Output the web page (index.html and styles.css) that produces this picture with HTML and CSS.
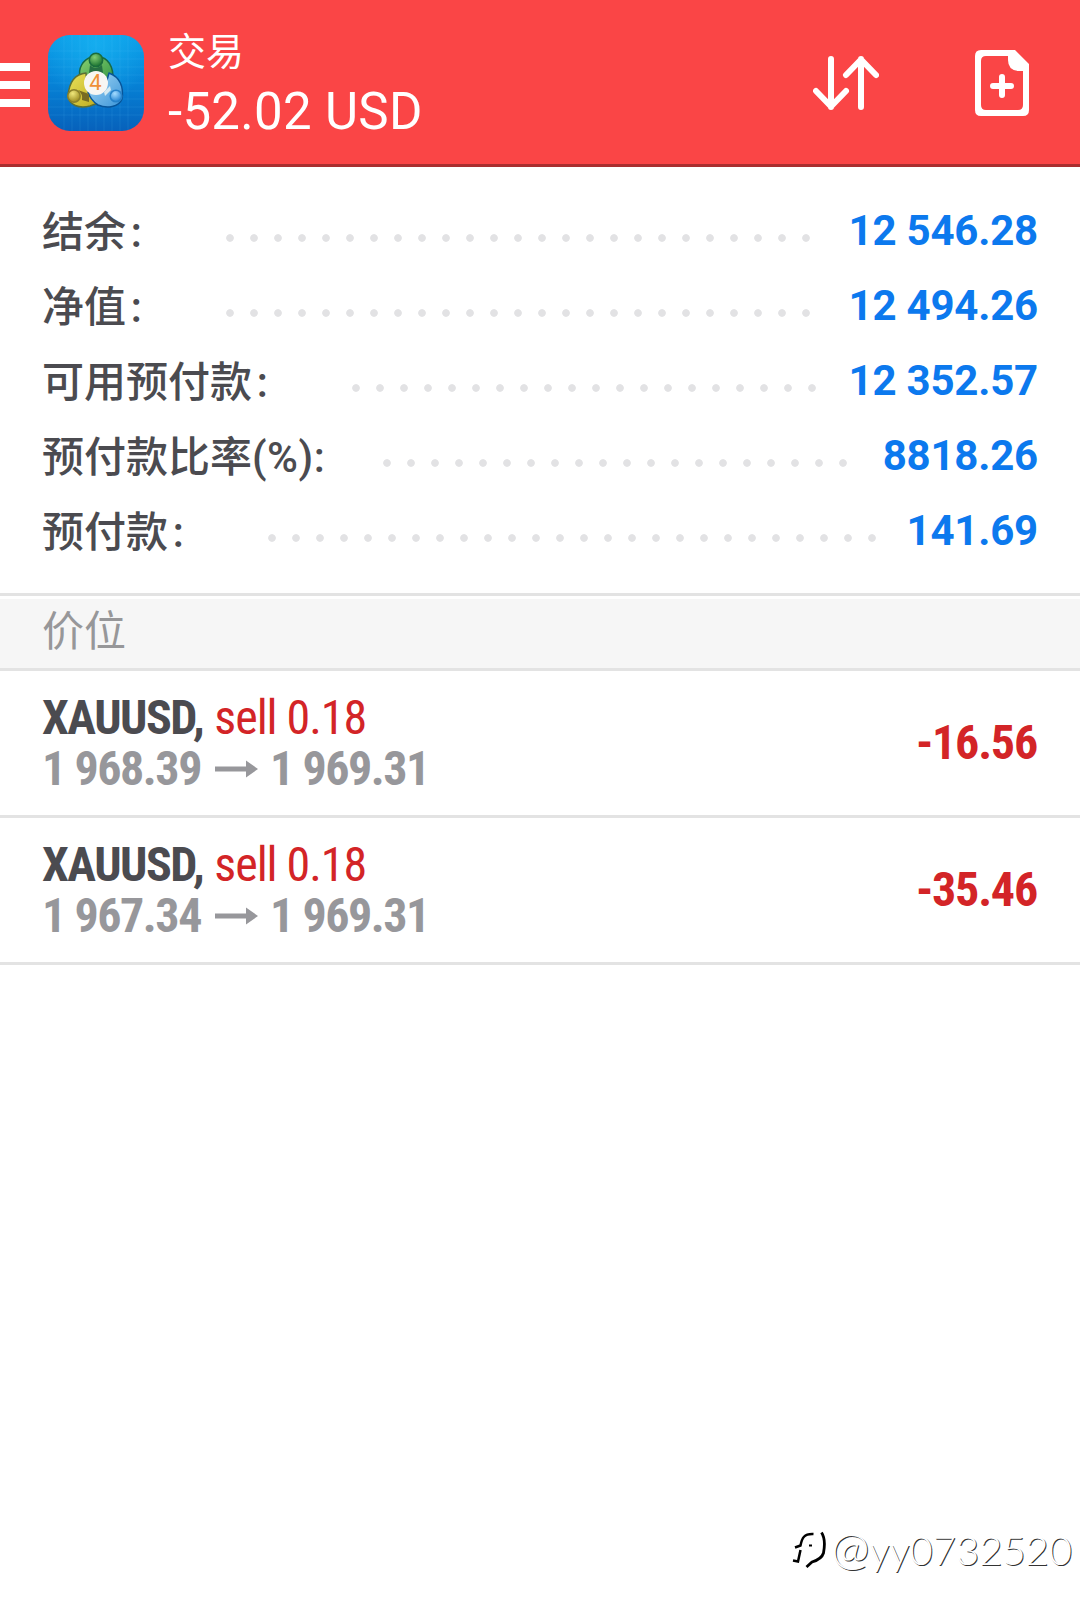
FILE: index.html
```html
<!DOCTYPE html>
<html lang="zh-CN">
<head>
<meta charset="utf-8">
<title>交易</title>
<link rel="stylesheet" href="styles.css">
</head>
<body>
<header class="topbar">
  <div class="menu"><i></i><i></i><i></i></div>
  <svg class="logo" width="98" height="98" viewBox="0 0 98 98">
    <defs>
      <linearGradient id="sky" x1="0" y1="0" x2="0" y2="1"><stop offset="0" stop-color="#0a9de8"/><stop offset=".5" stop-color="#0682d6"/><stop offset="1" stop-color="#0761bb"/></linearGradient>
      <radialGradient id="glow" cx=".5" cy=".1" r=".6"><stop offset="0" stop-color="#19b4f2" stop-opacity=".75"/><stop offset="1" stop-color="#19b4f2" stop-opacity="0"/></radialGradient>
      <linearGradient id="green" x1="0" y1="0" x2="1" y2="1"><stop offset="0" stop-color="#8ad070"/><stop offset="1" stop-color="#2f9342"/></linearGradient>
      <linearGradient id="yellow" x1="0" y1="0" x2="1" y2="1"><stop offset="0" stop-color="#e9e25a"/><stop offset="1" stop-color="#bda91e"/></linearGradient>
      <linearGradient id="blue" x1="0" y1="0" x2="1" y2="1"><stop offset="0" stop-color="#a5d8f5"/><stop offset="1" stop-color="#3a94d8"/></linearGradient>
      <radialGradient id="gball" cx=".4" cy=".3" r=".7"><stop offset="0" stop-color="#84cf72"/><stop offset="1" stop-color="#18702f"/></radialGradient>
      <radialGradient id="yball" cx=".4" cy=".3" r=".7"><stop offset="0" stop-color="#efe77b"/><stop offset="1" stop-color="#9c8c20"/></radialGradient>
      <radialGradient id="bball" cx=".4" cy=".3" r=".7"><stop offset="0" stop-color="#a5dcff"/><stop offset="1" stop-color="#2383d2"/></radialGradient>
    </defs>
    <rect x="1" y="1" width="96" height="96" rx="22" fill="url(#sky)"/>
    <rect x="1" y="1" width="96" height="96" rx="22" fill="url(#glow)"/>
    <path d="M17 2v94M25 1v96M33 1v96M41 1v96M49 1v96M57 1v96M65 1v96M73 1v96M81 2v94M2 17h94M1 25h96M1 33h96M1 41h96M1 49h96M1 57h96M1 65h96M1 73h96M2 81h94" stroke="#6cc4f5" stroke-opacity=".12" fill="none"/>
    <g stroke-linejoin="round" stroke-width="1.5">
      <path d="M44 23C36 26 31 34 33 43L49 51L65 51C68 38 64 26 54 23Z" fill="url(#green)" stroke="#176a45"/>
      <path d="M39 39C27 40 22 50 21 62C22 71 32 75 43 72L54 68L40 55Z" fill="url(#yellow)" stroke="#5d7035"/>
      <path d="M62 39C73 43 77 53 75 65C72 73 60 75 51 71C46 68 42 62 41 58L57 57Z" fill="url(#blue)" stroke="#07559a"/>
      <path d="M43 31Q48 37 55 31L56 39H42Z" fill="#276f42" stroke="none"/>
      <path d="M31 56Q36 60 35 66L42 68L42 60Z" fill="#786c22" stroke="none"/>
      <path d="M58 62L64 56L63 52L57 58Z" fill="#d6eaf1" stroke="none"/>
      <circle cx="49" cy="26" r="6.700" fill="url(#gball)" stroke="#1b6c3d"/>
      <circle cx="27" cy="62" r="6.200" fill="url(#yball)" stroke="#8b812b"/>
      <circle cx="69" cy="62" r="5.800" fill="url(#bball)" stroke="#2682ca"/>
    </g>
    <circle cx="49" cy="49" r="12" fill="#f7f6f3"/>
    <text class="logo-digit" x="48.500" y="56" text-anchor="middle">4</text>
  </svg>
  <div class="titles">
    <div class="title">交易</div>
    <div class="total">-52.02 USD</div>
  </div>
  <div class="actions">
    <svg width="66" height="68" viewBox="813 49 66 68" fill="none" stroke="#fff" stroke-width="6" stroke-linecap="round" stroke-linejoin="round"><path d="M831 59V107M816 91L831 106.500L846 91M861 107V59M846 75L861 59.500L876 75"/></svg>
    <svg width="54" height="68" viewBox="975 49 54 68"><path fill="#fff" fill-rule="evenodd" d="M981 50H1015L1029 64V110Q1029 116 1023 116H981Q975 116 975 110V56Q975 50 981 50ZM986 56Q981 56 981 61V105Q981 110 986 110H1018Q1023 110 1023 105V71H1018Q1008 70 1008 60V56Z"/><path d="M993 86H1011M1002 77V95" stroke="#fff" stroke-width="6" stroke-linecap="round"/></svg>
  </div>
</header>

<section class="summary">
  <div class="row"><span class="label">结余<span class="colon">：</span></span><span class="leader"></span><span class="value">12 546.28</span></div>
  <div class="row"><span class="label">净值<span class="colon">：</span></span><span class="leader"></span><span class="value">12 494.26</span></div>
  <div class="row"><span class="label">可用预付款<span class="colon">：</span></span><span class="leader"></span><span class="value">12 352.57</span></div>
  <div class="row"><span class="label">预付款比率<span class="unit">(%):</span></span><span class="leader"></span><span class="value">8818.26</span></div>
  <div class="row"><span class="label">预付款<span class="colon">：</span></span><span class="leader"></span><span class="value">141.69</span></div>
</section>

<h2 class="section-title">价位</h2>

<ul class="positions">
  <li class="position">
    <div class="deal">
      <div class="line"><b class="symbol">XAUUSD,</b> <span class="side">sell 0.18</span></div>
      <div class="line prices"><span>1 968.39</span><svg class="arrow" width="43" height="18" viewBox="0 0 43 18"><path d="M0 6.500H31V0.500L43 9L31 17.500V11.500H0Z" fill="#97979b"/></svg><span>1 969.31</span></div>
    </div>
    <div class="profit">-16.56</div>
  </li>
  <li class="position">
    <div class="deal">
      <div class="line"><b class="symbol">XAUUSD,</b> <span class="side">sell 0.18</span></div>
      <div class="line prices"><span>1 967.34</span><svg class="arrow" width="43" height="18" viewBox="0 0 43 18"><path d="M0 6.500H31V0.500L43 9L31 17.500V11.500H0Z" fill="#97979b"/></svg><span>1 969.31</span></div>
    </div>
    <div class="profit">-35.46</div>
  </li>
</ul>

<footer class="watermark">
  <svg width="36" height="42" viewBox="5 5 36 42" fill="none" stroke="#000"><path d="M27.500 10C18 9.500 16 14 14.500 21.500L9 23.500M14.500 26L12 37.500L7 36.500" stroke-width="2.500"/><path d="M35.500 8.500C38.500 13 39 21 37.500 29C36 34 31 36.500 26 38L20.500 43" stroke-width="2.800"/><path d="M23 21.500H26" stroke-width="2"/></svg>
  <span class="handle"><span class="at">@</span>yy0732520</span>
</footer>
</body>
</html>
```
FILE: styles.css
```css
* { box-sizing: border-box; }

body {
  margin: 0;
  min-height: 1612px;
  display: flex;
  flex-direction: column;
  background: #fff;
  color: #4b4b50;
  font-family: Roboto, "Noto Sans CJK SC", sans-serif;
}

.topbar {
  height: 167px;
  display: flex;
  align-items: flex-start;
  background: #fa4546;
  border-bottom: 3px solid #a92e2f;
  color: #fff;
}

.menu {
  width: 30px;
  margin-top: 63px;
  display: flex;
  flex-direction: column;
  gap: 10px;
}

.menu i { height: 8px; background: #fff; }

.logo { margin: 34px 0 0 17px; }

.logo-digit {
  font: 400 22px Roboto, sans-serif;
  fill: #ef9038;
}

.titles { margin: 25px 0 0 23px; }

.title { font-size: 38px; line-height: 54px; }

.total {
  font-size: 51px;
  line-height: 66px;
  letter-spacing: 0.3px;
  white-space: nowrap;
}

.actions {
  margin: 49px 51px 0 auto;
  display: flex;
  gap: 96px;
}

.summary {
  height: 426px;
  padding: 26px 42px 0;
}

.row {
  height: 75px;
  display: flex;
  align-items: center;
  font-size: 42px;
  line-height: 75px;
  white-space: nowrap;
}

.label {
  height: 75px;
  padding-top: 5px;
  font-weight: 500;
  line-height: 70px;
}

.colon {
  display: inline-block;
  width: 42px;
  font-size: 35px;
  line-height: 1;
  text-indent: 1.500px;
}

.unit { letter-spacing: 0.5px; }

.leader {
  flex: 1;
  height: 8px;
  margin: 15px 25px 0 58px;
  background: radial-gradient(circle at 4px 4px, #e2e2e4 3.400px, transparent 4.200px) 0 0 / 24px 8px repeat-x;
}

.value {
  color: #0c79ee;
  font-weight: 700;
  letter-spacing: -0.2px;
}

.section-title {
  height: 78px;
  margin: 0;
  padding: 0 42px;
  border-top: 3px solid #e3e3e3;
  border-bottom: 3px solid #e3e3e3;
  background: #f6f6f6;
  box-shadow: inset 0 3px #fff;
  color: #979799;
  font-size: 42px;
  font-weight: 400;
  line-height: 72px;
}

.positions { margin: 0; padding: 0; list-style: none; }

.position {
  height: 147px;
  padding: 0 42px;
  display: flex;
  align-items: center;
  justify-content: space-between;
  border-bottom: 3px solid #e3e3e3;
  font-family: "Roboto Condensed", Roboto, sans-serif;
  font-stretch: 75%;
  font-size: 48px;
}

.line { height: 51px; line-height: 51px; white-space: nowrap; }

.symbol { font-weight: 700; letter-spacing: -1.500px; }

.side { color: #d32427; letter-spacing: -1.050px; }

.prices {
  display: flex;
  align-items: center;
  gap: 12px;
  color: #97979b;
  font-weight: 700;
  letter-spacing: -1.450px;
}

.arrow { margin-left: 2px; }

.profit {
  margin: -2px 1px 0 0;
  color: #d32427;
  font-weight: 700;
  letter-spacing: -1.200px;
}

.watermark {
  margin: auto 8px 38px auto;
  display: flex;
  align-items: center;
  gap: 4px;
}

.handle {
  color: #fff;
  font: 300 40px/48px Lato, sans-serif;
  text-shadow: 1px 1px 0 #333;
}

.at { font-size: 46px; line-height: 1; }
```
